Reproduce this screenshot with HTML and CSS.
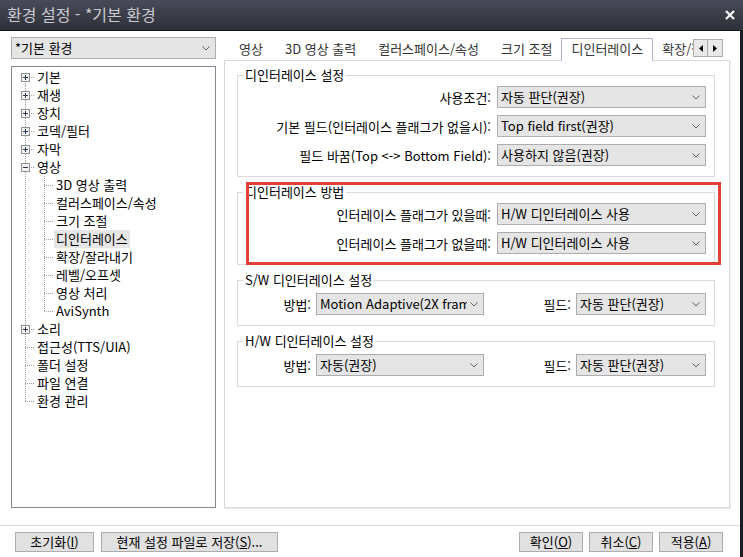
FILE: index.html
```html
<!DOCTYPE html>
<html lang="ko">
<head>
    <meta charset="UTF-8">
    <title>환경 설정 - *기본 환경</title>
    <link rel="stylesheet" href="styles.css">
</head>
<body>
<div class="window">
    <div class="titlebar">
        <span class="title">환경 설정 - *기본 환경</span>
        <svg class="close" width="10" height="10" viewBox="0 0 10 10"><path d="M1 1l8 8M9 1l-8 8" stroke="#fff" stroke-width="2.2"/></svg>
    </div>

    <div class="body">
        <div class="main">
            <!-- 왼쪽: 프로필 선택 + 트리 -->
            <div class="side">
                <div class="combo">
                    <span class="combo-text">*기본 환경</span>
                    <svg class="chev" width="8" height="5" viewBox="0 0 8 5"><path d="M.5.5 4 4 7.5.5" fill="none" stroke="#606060"/></svg>
                </div>
                <div class="tree">
                    <div class="row"><span class="g first"><svg class="exp" width="9" height="9" viewBox="0 0 9 9"><rect x=".5" y=".5" width="8" height="8" fill="#f3f3f3" stroke="#919191"/><path d="M2 4.5h5M4.5 2v5" stroke="#2b3a52"/></svg></span><span class="label">기본</span></div>
                    <div class="row"><span class="g tee"><svg class="exp" width="9" height="9" viewBox="0 0 9 9"><rect x=".5" y=".5" width="8" height="8" fill="#f3f3f3" stroke="#919191"/><path d="M2 4.5h5M4.5 2v5" stroke="#2b3a52"/></svg></span><span class="label">재생</span></div>
                    <div class="row"><span class="g tee"><svg class="exp" width="9" height="9" viewBox="0 0 9 9"><rect x=".5" y=".5" width="8" height="8" fill="#f3f3f3" stroke="#919191"/><path d="M2 4.5h5M4.5 2v5" stroke="#2b3a52"/></svg></span><span class="label">장치</span></div>
                    <div class="row"><span class="g tee"><svg class="exp" width="9" height="9" viewBox="0 0 9 9"><rect x=".5" y=".5" width="8" height="8" fill="#f3f3f3" stroke="#919191"/><path d="M2 4.5h5M4.5 2v5" stroke="#2b3a52"/></svg></span><span class="label">코덱/필터</span></div>
                    <div class="row"><span class="g tee"><svg class="exp" width="9" height="9" viewBox="0 0 9 9"><rect x=".5" y=".5" width="8" height="8" fill="#f3f3f3" stroke="#919191"/><path d="M2 4.5h5M4.5 2v5" stroke="#2b3a52"/></svg></span><span class="label">자막</span></div>
                    <div class="row"><span class="g tee"><svg class="exp" width="9" height="9" viewBox="0 0 9 9"><rect x=".5" y=".5" width="8" height="8" fill="#f3f3f3" stroke="#919191"/><path d="M2 4.5h5" stroke="#2b3a52"/></svg></span><span class="label">영상</span></div>
                    <div class="row"><span class="g pipe"></span><span class="g child tee"></span><span class="label">3D 영상 출력</span></div>
                    <div class="row"><span class="g pipe"></span><span class="g child tee"></span><span class="label">컬러스페이스/속성</span></div>
                    <div class="row"><span class="g pipe"></span><span class="g child tee"></span><span class="label">크기 조절</span></div>
                    <div class="row"><span class="g pipe"></span><span class="g child tee"></span><span class="label selected">디인터레이스</span></div>
                    <div class="row"><span class="g pipe"></span><span class="g child tee"></span><span class="label">확장/잘라내기</span></div>
                    <div class="row"><span class="g pipe"></span><span class="g child tee"></span><span class="label">레벨/오프셋</span></div>
                    <div class="row"><span class="g pipe"></span><span class="g child tee"></span><span class="label">영상 처리</span></div>
                    <div class="row"><span class="g pipe"></span><span class="g child last"></span><span class="label">AviSynth</span></div>
                    <div class="row"><span class="g tee"><svg class="exp" width="9" height="9" viewBox="0 0 9 9"><rect x=".5" y=".5" width="8" height="8" fill="#f3f3f3" stroke="#919191"/><path d="M2 4.5h5M4.5 2v5" stroke="#2b3a52"/></svg></span><span class="label">소리</span></div>
                    <div class="row"><span class="g tee"></span><span class="label">접근성(TTS/UIA)</span></div>
                    <div class="row"><span class="g tee"></span><span class="label">폴더 설정</span></div>
                    <div class="row"><span class="g tee"></span><span class="label">파일 연결</span></div>
                    <div class="row"><span class="g last"></span><span class="label">환경 관리</span></div>
                </div>
            </div>

            <!-- 오른쪽: 탭 + 설정 패널 -->
            <div class="content">
                <div class="tabstrip">
                    <div class="tabs">
                        <div class="tab">영상</div>
                        <div class="tab">3D 영상 출력</div>
                        <div class="tab">컬러스페이스/속성</div>
                        <div class="tab">크기 조절</div>
                        <div class="tab active">디인터레이스</div>
                        <div class="tab">확장/잘라내기</div>
                    </div>
                    <div class="tab-scroll">
                        <span class="scroll-btn"><svg width="4" height="7" viewBox="0 0 4 7"><path d="M4 0v7L0 3.5z"/></svg></span>
                        <span class="scroll-btn"><svg width="4" height="7" viewBox="0 0 4 7"><path d="M0 0v7l4-3.5z"/></svg></span>
                    </div>
                </div>

                <div class="panel">
                    <fieldset class="group">
                        <legend>디인터레이스 설정</legend>
                        <div class="field-row">
                            <span class="field-label">사용조건:</span>
                            <div class="combo wide"><span class="combo-text">자동 판단(권장)</span><svg class="chev" width="8" height="5" viewBox="0 0 8 5"><path d="M.5.5 4 4 7.5.5" fill="none" stroke="#606060"/></svg></div>
                        </div>
                        <div class="field-row">
                            <span class="field-label">기본 필드(인터레이스 플래그가 없을시):</span>
                            <div class="combo wide"><span class="combo-text">Top field first(권장)</span><svg class="chev" width="8" height="5" viewBox="0 0 8 5"><path d="M.5.5 4 4 7.5.5" fill="none" stroke="#606060"/></svg></div>
                        </div>
                        <div class="field-row">
                            <span class="field-label">필드 바꿈(Top &lt;-&gt; Bottom Field):</span>
                            <div class="combo wide"><span class="combo-text">사용하지 않음(권장)</span><svg class="chev" width="8" height="5" viewBox="0 0 8 5"><path d="M.5.5 4 4 7.5.5" fill="none" stroke="#606060"/></svg></div>
                        </div>
                    </fieldset>

                    <fieldset class="group">
                        <legend>디인터레이스 방법</legend>
                        <div class="field-row">
                            <span class="field-label">인터레이스 플래그가 있을때:</span>
                            <div class="combo wide"><span class="combo-text">H/W 디인터레이스 사용</span><svg class="chev" width="8" height="5" viewBox="0 0 8 5"><path d="M.5.5 4 4 7.5.5" fill="none" stroke="#606060"/></svg></div>
                        </div>
                        <div class="field-row">
                            <span class="field-label">인터레이스 플래그가 없을때:</span>
                            <div class="combo wide"><span class="combo-text">H/W 디인터레이스 사용</span><svg class="chev" width="8" height="5" viewBox="0 0 8 5"><path d="M.5.5 4 4 7.5.5" fill="none" stroke="#606060"/></svg></div>
                        </div>
                    </fieldset>

                    <fieldset class="group pair">
                        <legend>S/W 디인터레이스 설정</legend>
                        <div class="pair-row">
                            <span class="field-label">방법:</span>
                            <div class="combo"><span class="combo-text">Motion Adaptive(2X frame rate)</span><svg class="chev" width="8" height="5" viewBox="0 0 8 5"><path d="M.5.5 4 4 7.5.5" fill="none" stroke="#606060"/></svg></div>
                            <span class="field-label">필드:</span>
                            <div class="combo"><span class="combo-text">자동 판단(권장)</span><svg class="chev" width="8" height="5" viewBox="0 0 8 5"><path d="M.5.5 4 4 7.5.5" fill="none" stroke="#606060"/></svg></div>
                        </div>
                    </fieldset>

                    <fieldset class="group pair">
                        <legend>H/W 디인터레이스 설정</legend>
                        <div class="pair-row">
                            <span class="field-label">방법:</span>
                            <div class="combo"><span class="combo-text">자동(권장)</span><svg class="chev" width="8" height="5" viewBox="0 0 8 5"><path d="M.5.5 4 4 7.5.5" fill="none" stroke="#606060"/></svg></div>
                            <span class="field-label">필드:</span>
                            <div class="combo"><span class="combo-text">자동 판단(권장)</span><svg class="chev" width="8" height="5" viewBox="0 0 8 5"><path d="M.5.5 4 4 7.5.5" fill="none" stroke="#606060"/></svg></div>
                        </div>
                    </fieldset>

                    <!-- 강조 표시 -->
                    <div class="highlight"></div>
                </div>
            </div>
        </div>

        <div class="footer">
            <button class="btn btn-reset">초기화(<u>I</u>)</button>
            <button class="btn btn-save">현재 설정 파일로 저장(<u>S</u>)...</button>
            <div class="footer-right">
                <button class="btn">확인(<u>O</u>)</button>
                <button class="btn">취소(<u>C</u>)</button>
                <button class="btn">적용(<u>A</u>)</button>
            </div>
        </div>
    </div>
</div>
</body>
</html>
```

FILE: styles.css
```css
body {
    margin: 0;
    font-family: "Noto Sans CJK KR", "Noto Sans", sans-serif;
    font-size: 13px;
    color: #000;
    background: #fff;
}
.window {
    width: 743px;
    height: 557px;
    display: flex;
    flex-direction: column;
    overflow: hidden;
}
.titlebar {
    height: 30px;
    flex: none;
    display: flex;
    align-items: center;
    justify-content: space-between;
    padding: 0 8px 0 7px;
    background: linear-gradient(#474a58, #2e3038);
    border-bottom: 1px solid #121214;
    color: #c9cbd3;
    font-size: 16px;
}
.title {
    line-height: 28px;
    padding-bottom: 2px;
}
.body {
    flex: 1;
    min-height: 0;
    display: flex;
    flex-direction: column;
    border-right: 3px solid #1c1d22;
    background: #fff;
}
.main {
    height: 494px;
    flex: none;
    box-sizing: border-box;
    padding: 6px 10px 0 11px;
    display: flex;
    gap: 8px;
}

/* 콤보박스 */
.combo {
    height: 22px;
    min-width: 0;
    box-sizing: border-box;
    display: flex;
    align-items: center;
    border: 1px solid #adadad;
    background: #e5e5e5;
    padding-left: 3px;
}
.combo-text {
    flex: 1;
    min-width: 0;
    overflow: hidden;
    white-space: nowrap;
    line-height: 20px;
}
.chev {
    flex: none;
    margin: 0 5px 0 3px;
}
.combo.wide {
    width: 209px;
    flex: none;
}

/* 트리 */
.side {
    width: 205px;
    flex: none;
    display: flex;
    flex-direction: column;
    gap: 7px;
}
.tree {
    height: 442px;
    box-sizing: border-box;
    border: 1px solid #828790;
    padding-top: 1px;
}
.row {
    display: flex;
    height: 18px;
    line-height: 18px;
}
.g {
    width: 23px;
    height: 18px;
    flex: none;
    display: flex;
    background-repeat: no-repeat;
}
.g.child {
    width: 19px;
}
.exp {
    margin: 5px 0 0 9px;
}
.pipe {
    background-image: repeating-linear-gradient(to bottom, #a0a0a0 0 1px, transparent 1px 2px);
    background-size: 1px 18px;
    background-position: 13px 0;
}
.tee {
    background-image: repeating-linear-gradient(to bottom, #a0a0a0 0 1px, transparent 1px 2px),
                      repeating-linear-gradient(to right, #a0a0a0 0 1px, transparent 1px 2px);
    background-size: 1px 18px, 10px 1px;
    background-position: 13px 0, 13px 9px;
}
.first {
    background-image: repeating-linear-gradient(to bottom, #a0a0a0 0 1px, transparent 1px 2px),
                      repeating-linear-gradient(to right, #a0a0a0 0 1px, transparent 1px 2px);
    background-size: 1px 9px, 10px 1px;
    background-position: 13px 9px, 13px 9px;
}
.last {
    background-image: repeating-linear-gradient(to bottom, #a0a0a0 0 1px, transparent 1px 2px),
                      repeating-linear-gradient(to right, #a0a0a0 0 1px, transparent 1px 2px);
    background-size: 1px 10px, 10px 1px;
    background-position: 13px 0, 13px 9px;
}
.child.tee, .child.last {
    background-position: 9px 0, 9px 9px;
}
.label {
    padding: 0 2px;
    white-space: nowrap;
}
.label.selected {
    background: #e6e6e6;
}

/* 탭 */
.content {
    flex: 1;
    min-width: 0;
    display: flex;
    flex-direction: column;
}
.tabstrip {
    height: 24px;
    flex: none;
    display: flex;
    position: relative;
    z-index: 1;
}
.tabs {
    flex: 1;
    min-width: 0;
    display: flex;
    align-items: flex-start;
    overflow: hidden;
    padding-left: 4px;
    color: #333;
}
.tab {
    flex: none;
    margin-top: 3px;
    height: 20px;
    line-height: 18px;
    padding: 0 11px;
    white-space: nowrap;
}
.tab.active {
    margin: 1px -2px 0;
    height: 23px;
    line-height: 19px;
    padding: 0 9px;
    box-sizing: border-box;
    border: 1px solid #adb5d6;
    border-bottom: none;
    background: #fff;
}
.tab-scroll {
    flex: none;
    display: flex;
    margin: 2px 7px 0 0;
}
.scroll-btn {
    width: 15px;
    height: 18px;
    box-sizing: border-box;
    border: 1px solid #adadad;
    background: #e9e9e9;
    display: flex;
    align-items: center;
    justify-content: center;
}
.scroll-btn + .scroll-btn {
    border-left: none;
}

/* 패널 */
.panel {
    height: 448px;
    flex: none;
    margin-top: -1px;
    box-sizing: border-box;
    border: 1px solid #d9d9d9;
    box-shadow: 1px 1px 0 #ececec;
    padding: 6px 14px 0 12px;
    display: flex;
    flex-direction: column;
    gap: 7px;
    position: relative;
}
.group {
    margin: 0;
    min-width: 0;
    border: 1px solid #dcdcdc;
    padding: 3px 8px 10px 0;
    display: flex;
    flex-direction: column;
    gap: 7px;
}
.group legend {
    margin-left: 5px;
    padding: 0 2px;
    line-height: 16px;
}
.group.pair {
    padding-top: 5px;
}
.field-row {
    display: flex;
    align-items: center;
}
.field-label {
    flex: 1;
    text-align: right;
    padding-right: 6px;
    white-space: nowrap;
}
.pair-row {
    display: grid;
    grid-template-columns: 78px 168px 1fr 130px;
    align-items: center;
}
.pair-row .field-label {
    padding-right: 5px;
}
.highlight {
    position: absolute;
    left: 21px;
    top: 121px;
    width: 475px;
    height: 83px;
    box-sizing: border-box;
    border: 3px solid #e3403a;
}

/* 하단 버튼 */
.footer {
    flex: 1;
    border-top: 1px solid #dcdcdc;
    padding: 6px 17px 0 15px;
    display: flex;
    align-items: flex-start;
    gap: 7px;
}
.footer-right {
    margin-left: auto;
    display: flex;
    gap: 6px;
}
.btn {
    height: 20px;
    width: 64px;
    box-sizing: border-box;
    border: 1px solid #adadad;
    background: #e1e1e1;
    font-family: inherit;
    font-size: 13px;
    color: #000;
    line-height: 18px;
    padding: 0;
    border-radius: 0;
}
.btn-reset {
    width: 79px;
}
.btn-save {
    width: 177px;
}
```
